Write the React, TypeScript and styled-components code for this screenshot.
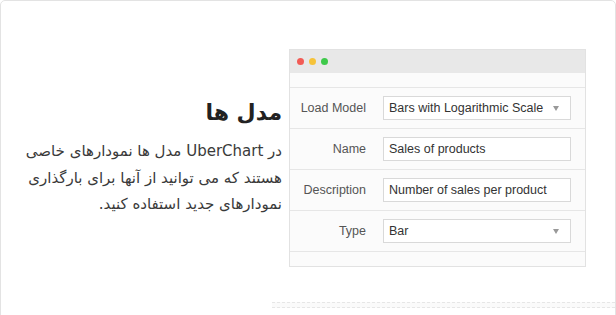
import * as React from 'react';
import styled, {createGlobalStyle} from 'styled-components';

const Global = createGlobalStyle`
  html, body { margin: 0; padding: 0; background: #fff; }
  body { width: 616px; height: 315px; overflow: hidden; }
`;

const Card = styled.section`
  box-sizing: border-box;
  width: 616px;
  height: 330px;
  border: 1px solid #e3e3e3;
  border-radius: 5px;
  padding-top: 48px;
  display: flex;
  flex-direction: column;
`;

const Content = styled.div`
  display: flex;
  align-items: flex-start;
`;

const Intro = styled.div`
  width: 281px;
  direction: rtl;
  text-align: right;
  box-sizing: border-box;
  font-family: "DejaVu Sans", "Noto Sans", sans-serif;
  > h2 {
    margin: 49px 0 0;
    font-size: 22px;
    line-height: 30px;
    font-weight: bold;
    color: #222;
  }
  > p {
    margin: 10px 0 0;
    font-size: 15px;
    line-height: 26.5px;
    color: #3a3a3a;
    white-space: nowrap;
  }
`;

const Window = styled.div`
  box-sizing: border-box;
  margin-left: 7px;
  width: 297px;
  border: 1px solid #e2e2e2;
  background: #fbfbfb;
  font-family: "Liberation Sans", Arial, sans-serif;
  font-size: 12.5px;
`;

const TitleBar = styled.div`
  height: 23px;
  background: #e8e8e8;
  display: flex;
  align-items: center;
  gap: 5px;
  padding-left: 7px;
`;

const Dot = styled.span<{$color: string}>`
  width: 7px;
  height: 7px;
  border-radius: 50%;
  background: ${p => p.$color};
`;

const Form = styled.div`
  margin-top: 14px;
  border-top: 1px solid #e6e6e6;
  padding-bottom: 14px;
`;

const Row = styled.div`
  height: 40px;
  border-bottom: 1px solid #e6e6e6;
  display: flex;
  align-items: center;
`;

const Label = styled.label`
  width: 76px;
  text-align: right;
  color: #555;
`;

const Field = styled.div`
  box-sizing: border-box;
  margin-left: 17px;
  width: 188px;
  height: 24px;
  border: 1px solid #d9d9d9;
  background: #fff;
  color: #333;
  display: flex;
  align-items: center;
  justify-content: space-between;
  padding: 0 11px 0 5px;
`;

const Arrow = styled.span`
  width: 0;
  height: 0;
  border-left: 3.5px solid transparent;
  border-right: 3.5px solid transparent;
  border-top: 5px solid #999;
`;

const Footer = styled.div`
  margin-top: auto;
  margin-left: 271px;
  height: 4px;
  border-top: 1px dashed #e6e6e6;
  border-bottom: 1px dashed #e6e6e6;
  margin-bottom: 21px;
  background: #fafafa;
`;

const rows = [
  {label: 'Load Model', value: 'Bars with Logarithmic Scale', select: true},
  {label: 'Name', value: 'Sales of products', select: false},
  {label: 'Description', value: 'Number of sales per product', select: false},
  {label: 'Type', value: 'Bar', select: true},
];

export default function App() {
  return (
    <Card>
      <Global />
      <Content>
        <Intro>
          <h2>مدل ها</h2>
          <p>
            در UberChart مدل ها نمودارهای خاصی
            <br />
            هستند که می توانید از آنها برای بارگذاری
            <br />
            نمودارهای جدید استفاده کنید.
          </p>
        </Intro>
        <Window>
          <TitleBar>
            <Dot $color="#f25b55" />
            <Dot $color="#f6c33a" />
            <Dot $color="#3ec94a" />
          </TitleBar>
          <Form>
            {rows.map(r => (
              <Row key={r.label}>
                <Label>{r.label}</Label>
                <Field>
                  <span>{r.value}</span>
                  {r.select && <Arrow />}
                </Field>
              </Row>
            ))}
          </Form>
        </Window>
      </Content>
      <Footer />
    </Card>
  );
}
